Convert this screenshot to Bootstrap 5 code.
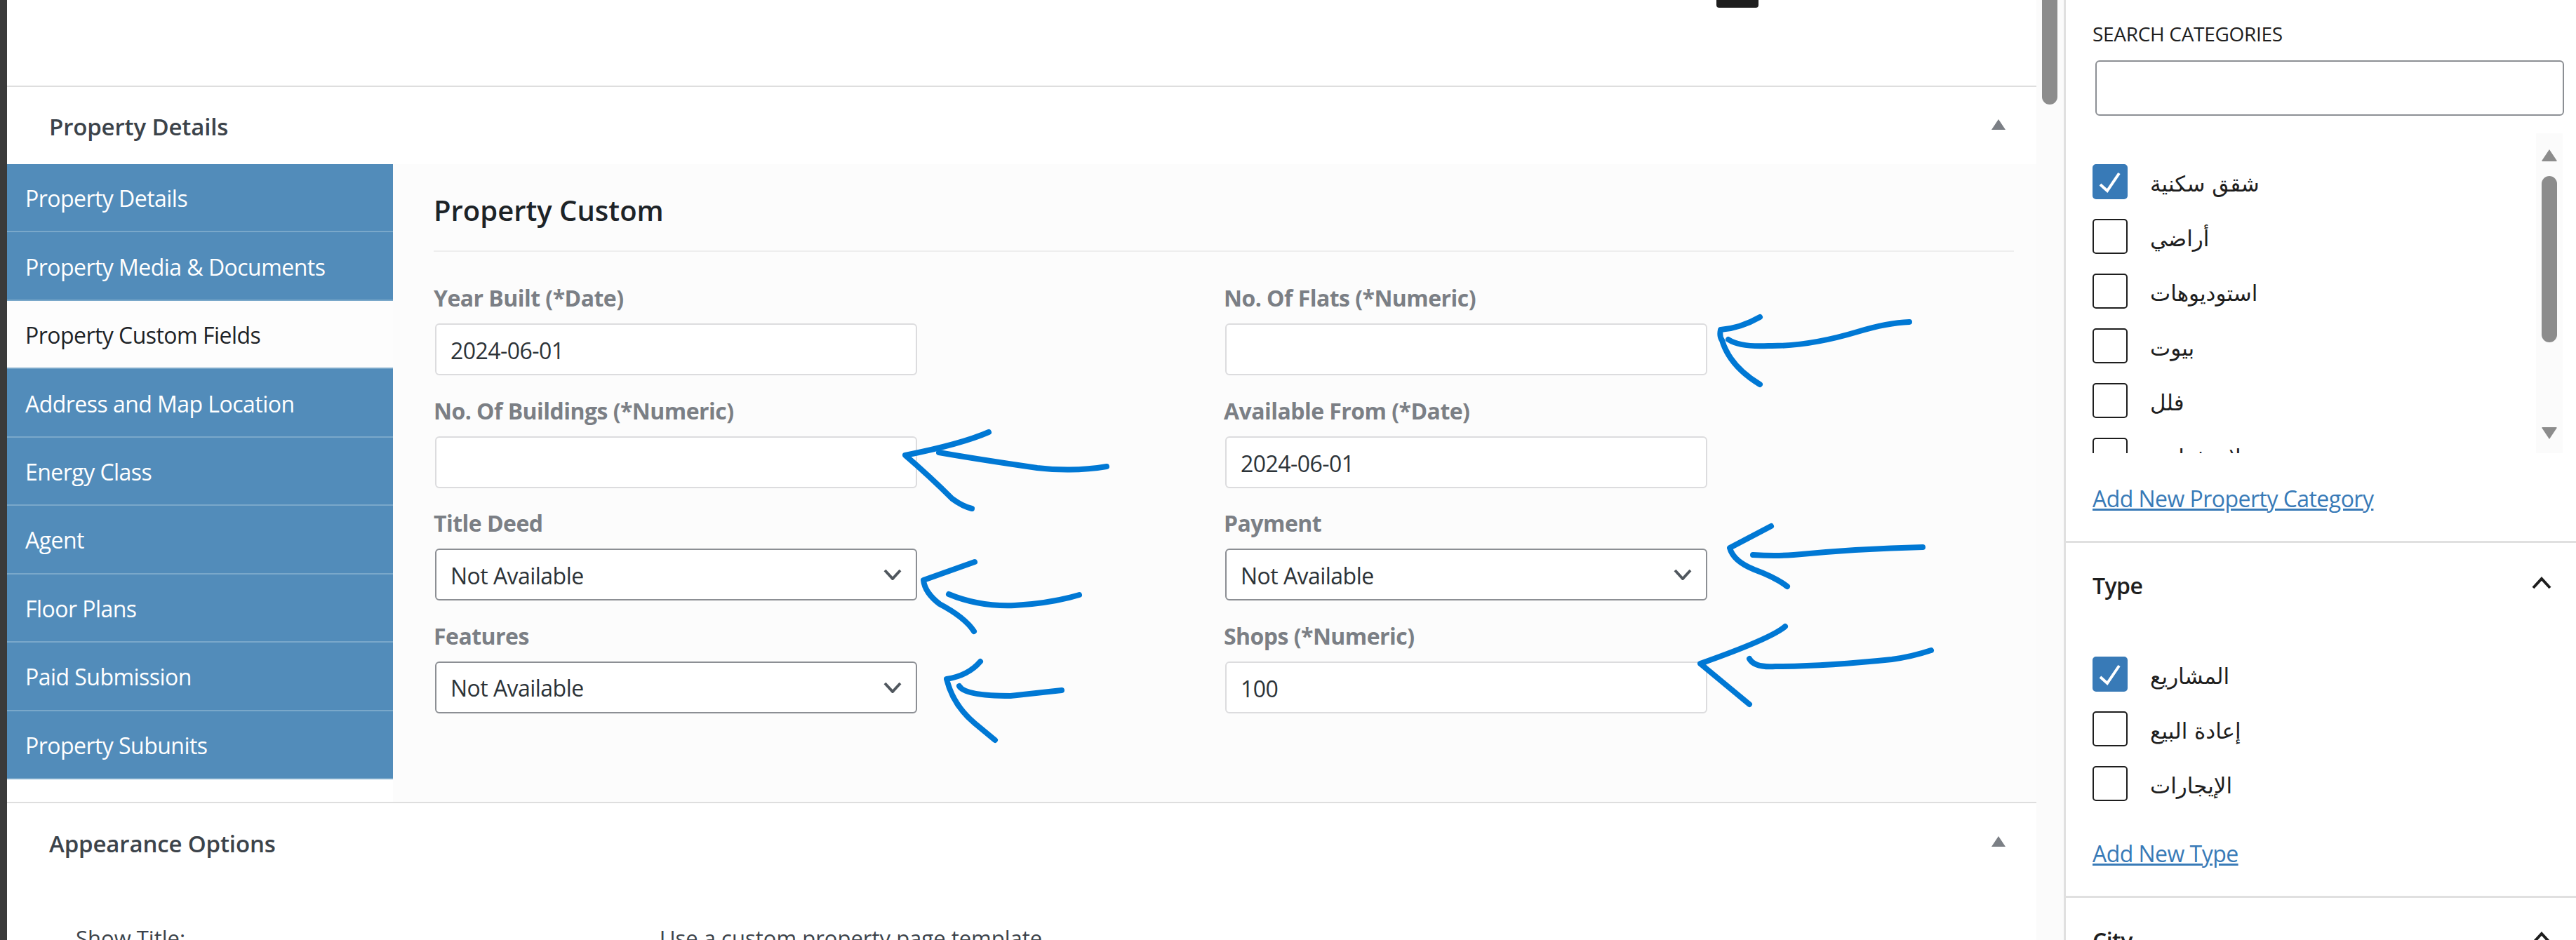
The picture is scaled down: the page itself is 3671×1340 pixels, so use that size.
<!DOCTYPE html>
<html lang="en">
<head>
  <meta charset="UTF-8" />
  <meta name="viewport" content="width=device-width, initial-scale=1.0"/>
  <title>Edit Property</title>

  <!-- Bootstrap CSS -->
  <link rel="stylesheet" href="https://cdn.jsdelivr.net/npm/bootstrap@5.3.0/dist/css/bootstrap.min.css" />
  <style>
    html, body { height: 1340px; overflow: hidden; }
    body {
      font-family: "Open Sans", "DejaVu Sans", sans-serif;
      font-size: 32px;
      letter-spacing: -.54px;
      color: #2c3338;
      background: #fff;
    }
    .app-shell { position: relative; width: 3671px; height: 1340px; overflow: hidden; }
    .edge-strip { width: 10px; background: #3a3a3a; flex: none; }
    .editor-col { width: 2892px; flex: none; }

    /* top of the editor */
    .top-gap { height: 122px; padding-right: 396px; }
    .black-tab { width: 60px; height: 11px; background: #1e1e1e; border-radius: 0 0 4px 4px; }

    /* metaboxes */
    .meta-box { border-top: 2px solid #dedede; }
    .meta-head { height: 110px; padding: 4px 44px 0 60px; color: #3c434a; font-size: 33px; letter-spacing: -.15px; font-weight: 600; }
    .head-tri { width: 20px; height: 15px; fill: #7b7f85; margin-top: -8px; }

    .tab-rail { width: 550px; flex: none; align-self: flex-start; }
    .tab-rail .nav-link {
      height: 97.45px;
      padding: 3px 0 0 26px;
      display: flex;
      align-items: center;
      background: #528cba;
      color: #fff;
      border-bottom: 2px solid #7aa8ca;
    }
    .tab-rail .nav-link.active { background: #fdfdfd; color: #1d2327; }

    .tab-pane-box { flex: 1; height: 909px; background: #fcfcfc; padding: 41px 32px 0 58px; }
    .pane-title {
      height: 84px;
      margin: 0;
      font-size: 40px;
      line-height: 50px;
      font-weight: 600;
      color: #1d2327;
      letter-spacing: 0;
      border-bottom: 2px solid #eeeeee;
    }
    .pane-fields { padding-top: 46px; }
    .field-cell { height: 160.67px; }
    .field-cell label {
      display: block;
      height: 40px;
      margin-bottom: 16px;
      line-height: 40px;
      font-weight: 700;
      color: #7b7f85;
    }
    .field-cell .form-control,
    .field-cell .form-select {
      width: 687px;
      height: 74px;
      margin-left: 2px;
      padding: 3px 20px 0;
      font-size: 32px;
      letter-spacing: -.54px;
      color: #2c3338;
      background-color: #fff;
      border: 2px solid #dcdcde;
      border-radius: 6px;
    }
    .field-cell .form-select {
      border-color: #8c8f94;
      background-image: url("data:image/svg+xml,%3csvg xmlns='http://www.w3.org/2000/svg' viewBox='0 0 26 16'%3e%3cpath fill='none' stroke='%2350575e' stroke-width='4' d='M2 2l11 12L24 2'/%3e%3c/svg%3e");
      background-size: 26px 16px;
      background-position: right 20px center;
    }
    .appear-head { height: 112px; }
    .appear-row { padding-left: 98px; font-size: 31px; letter-spacing: 0; color: #3c434a; margin-top: 57px; }
    .appear-row span:first-child { width: 832px; }

    /* page scrollbar */
    .page-scroll { width: 39px; flex: none; background: #fbfbfb; padding-left: 8px; }
    .page-thumb { width: 22px; height: 149px; background: #8c8c8c; border-radius: 0 0 11px 11px; }

    /* right column */
    .side-col { flex: 1; border-left: 3px solid #e0e0e0; color: #1e1e1e; }
    .side-panel { padding: 0 0 0 38px; border-bottom: 3px solid #e0e0e0; }
    .cat-panel { height: 774px; padding-top: 31px; }
    .search-title { font-size: 28px; line-height: 34px; height: 55px; font-weight: 500; letter-spacing: -.3px; margin: 0; }
    .cat-search { width: 668px; height: 79px; margin-left: 4px; border: 2px solid #8c8f94; border-radius: 6px; }
    .cat-list-wrap { height: 456px; margin-top: 25px; }
    .cat-list { flex: 1; overflow: hidden; padding-top: 44px; }
    .term-row { height: 50px; margin-bottom: 28px; display: flex; align-items: center; gap: 32px; }
    .term-row .form-check-input {
      flex: none;
      width: 50px;
      height: 50px;
      margin: 0;
      border: 2px solid #1e1e1e;
      border-radius: 5px;
      background-color: #fff;
    }
    .term-row .form-check-input:checked {
      background-color: #387ab7;
      border-color: #387ab7;
      background-image: url("data:image/svg+xml,%3csvg xmlns='http://www.w3.org/2000/svg' viewBox='0 0 50 50'%3e%3cpath fill='none' stroke='%23fff' stroke-width='4' d='M11 29l10 9 17-25'/%3e%3c/svg%3e");
      background-size: 50px 50px;
    }
    .term-row label { direction: rtl; letter-spacing: 0; font-size: 31px; padding-top: 7px; font-family: "DejaVu Sans", sans-serif; }
    .list-scroll { width: 38px; margin: 0 19px 0 0; background: #fbfbfb; padding: 22px 8px 20px; height: 456px; flex: none; }
    .list-scroll svg { display: block; width: 22px; height: 18px; fill: #8c8c8c; }
    .list-thumb { width: 22px; height: 237px; background: #8c8c8c; border-radius: 11px; margin: 21px 0 121px; }
    .add-link { display: inline-block; color: #387ab7; text-decoration: underline; line-height: 44px; }
    .cat-add { margin-top: 43px; }
    .type-panel { height: 506px; }
    .side-head { height: 162px; padding: 37px 35px 0 0; font-weight: 600; }
    .chev { width: 28px; height: 18px; fill: none; stroke: #1e1e1e; stroke-width: 4; margin-top: 11px; }
    .type-add { margin-top: 25px; }
    .city-panel { padding: 37px 35px 0 38px; font-weight: 600; }

    /* hand drawn arrows on top of the screenshot */
    .ink-layer { position: absolute; top: 0; left: 0; width: 3671px; height: 1340px; pointer-events: none; }
    .ink-layer path { fill: none; stroke: #0078d4; stroke-width: 8; stroke-linecap: round; stroke-linejoin: round; }
  </style>
</head>
<body>
  <div class="app-shell d-flex">
    <div class="edge-strip"></div>

    <!-- Main editor column -->
    <div class="editor-col">
      <div class="top-gap d-flex justify-content-end"><div class="black-tab"></div></div>

      <div class="meta-box">
        <div class="meta-head d-flex justify-content-between align-items-center">
          <span>Property Details</span>
          <svg class="head-tri" viewBox="0 0 20 15"><path d="M10 0l10 15H0z"/></svg>
        </div>
        <div class="d-flex">
          <nav class="tab-rail nav flex-column">
            <a class="nav-link" href="#">Property Details</a>
            <a class="nav-link" href="#">Property Media &amp; Documents</a>
            <a class="nav-link active" href="#">Property Custom Fields</a>
            <a class="nav-link" href="#">Address and Map Location</a>
            <a class="nav-link" href="#">Energy Class</a>
            <a class="nav-link" href="#">Agent</a>
            <a class="nav-link" href="#">Floor Plans</a>
            <a class="nav-link" href="#">Paid Submission</a>
            <a class="nav-link" href="#">Property Subunits</a>
          </nav>
          <div class="tab-pane-box">
            <h3 class="pane-title">Property Custom</h3>
            <div class="pane-fields row g-0">
              <div class="col-6 field-cell">
                <label>Year Built (*Date)</label>
                <input class="form-control" type="text" value="2024-06-01">
              </div>
              <div class="col-6 field-cell">
                <label>No. Of Flats (*Numeric)</label>
                <input class="form-control" type="text">
              </div>
              <div class="col-6 field-cell">
                <label>No. Of Buildings (*Numeric)</label>
                <input class="form-control" type="text">
              </div>
              <div class="col-6 field-cell">
                <label>Available From (*Date)</label>
                <input class="form-control" type="text" value="2024-06-01">
              </div>
              <div class="col-6 field-cell">
                <label>Title Deed</label>
                <select class="form-select"><option>Not Available</option></select>
              </div>
              <div class="col-6 field-cell">
                <label>Payment</label>
                <select class="form-select"><option>Not Available</option></select>
              </div>
              <div class="col-6 field-cell">
                <label>Features</label>
                <select class="form-select"><option>Not Available</option></select>
              </div>
              <div class="col-6 field-cell">
                <label>Shops (*Numeric)</label>
                <input class="form-control" type="text" value="100">
              </div>
            </div>
          </div>
        </div>
      </div>

      <div class="meta-box">
        <div class="meta-head appear-head d-flex justify-content-between align-items-center">
          <span>Appearance Options</span>
          <svg class="head-tri" viewBox="0 0 20 15"><path d="M10 0l10 15H0z"/></svg>
        </div>
        <div class="appear-row d-flex">
          <span>Show Title:</span>
          <span>Use a custom property page template</span>
        </div>
      </div>
    </div>

    <!-- Page scrollbar -->
    <div class="page-scroll"><div class="page-thumb"></div></div>

    <!-- Right column -->
    <aside class="side-col">
      <div class="side-panel cat-panel">
        <p class="search-title">SEARCH CATEGORIES</p>
        <div class="cat-search"></div>
        <div class="cat-list-wrap d-flex">
          <div class="cat-list">
            <div class="term-row"><input class="form-check-input" type="checkbox" checked><label>شقق سكنية</label></div>
            <div class="term-row"><input class="form-check-input" type="checkbox"><label>أراضي</label></div>
            <div class="term-row"><input class="form-check-input" type="checkbox"><label>استوديوهات</label></div>
            <div class="term-row"><input class="form-check-input" type="checkbox"><label>بيوت</label></div>
            <div class="term-row"><input class="form-check-input" type="checkbox"><label>فلل</label></div>
            <div class="term-row"><input class="form-check-input" type="checkbox"><label>لاستثمارية</label></div>
          </div>
          <div class="list-scroll">
            <svg viewBox="0 0 22 18"><path d="M11 1l10 15a1 1 0 0 1-1 2H2a1 1 0 0 1-1-2z"/></svg>
            <div class="list-thumb"></div>
            <svg viewBox="0 0 22 18"><path d="M11 17L1 2a1 1 0 0 1 1-2h18a1 1 0 0 1 1 2z"/></svg>
          </div>
        </div>
        <a class="add-link cat-add" href="#">Add New Property Category</a>
      </div>

      <div class="side-panel type-panel">
        <div class="side-head d-flex justify-content-between align-items-start">
          <span>Type</span>
          <svg class="chev" viewBox="0 0 28 18"><path d="M2 16L14 3l12 13"/></svg>
        </div>
        <div class="term-row"><input class="form-check-input" type="checkbox" checked><label>المشاريع</label></div>
        <div class="term-row"><input class="form-check-input" type="checkbox"><label>إعادة البيع</label></div>
        <div class="term-row"><input class="form-check-input" type="checkbox"><label>الإيجارات</label></div>
        <a class="add-link type-add" href="#">Add New Type</a>
      </div>

      <div class="city-panel d-flex justify-content-between align-items-start">
        <span>City</span>
        <svg class="chev" viewBox="0 0 28 18"><path d="M2 16L14 3l12 13"/></svg>
      </div>
    </aside>

    <!-- Hand drawn arrows -->
    <svg class="ink-layer" viewBox="0 0 3671 1340">
      <path d="M2508 452Q2480 468 2452 470Q2450 480 2454 485Q2465 522 2508 548"/>
      <path d="M2463 484Q2480 495 2520 493Q2577 494 2647 473Q2690 460 2721 459"/>
      <path d="M1409 616Q1370 633 1290 649Q1325 679 1357 711Q1372 722 1385 725"/>
      <path d="M1338 645Q1395 655 1478 667Q1529 673 1577 665"/>
      <path d="M1389 801L1316 827Q1318 845 1339 861Q1375 880 1388 900"/>
      <path d="M1352 847Q1395 865 1446 863Q1497 860 1538 848"/>
      <path d="M1397 943Q1380 963 1349 968Q1358 1005 1389 1031L1418 1055"/>
      <path d="M1367 978Q1375 992 1440 992L1513 984"/>
      <path d="M2524 750L2465 781Q2470 800 2500 812Q2530 823 2547 836"/>
      <path d="M2498 791Q2530 793 2556 791Q2650 782 2740 780"/>
      <path d="M2544 893Q2525 910 2423 946L2458 975L2493 1004"/>
      <path d="M2493 939Q2500 952 2530 950Q2600 950 2696 940Q2725 936 2752 927"/>
    </svg>
  </div>

  <!-- Bootstrap JS Bundle -->
  <script src="https://cdn.jsdelivr.net/npm/bootstrap@5.3.0/dist/js/bootstrap.bundle.min.js"></script>
</body>
</html>
